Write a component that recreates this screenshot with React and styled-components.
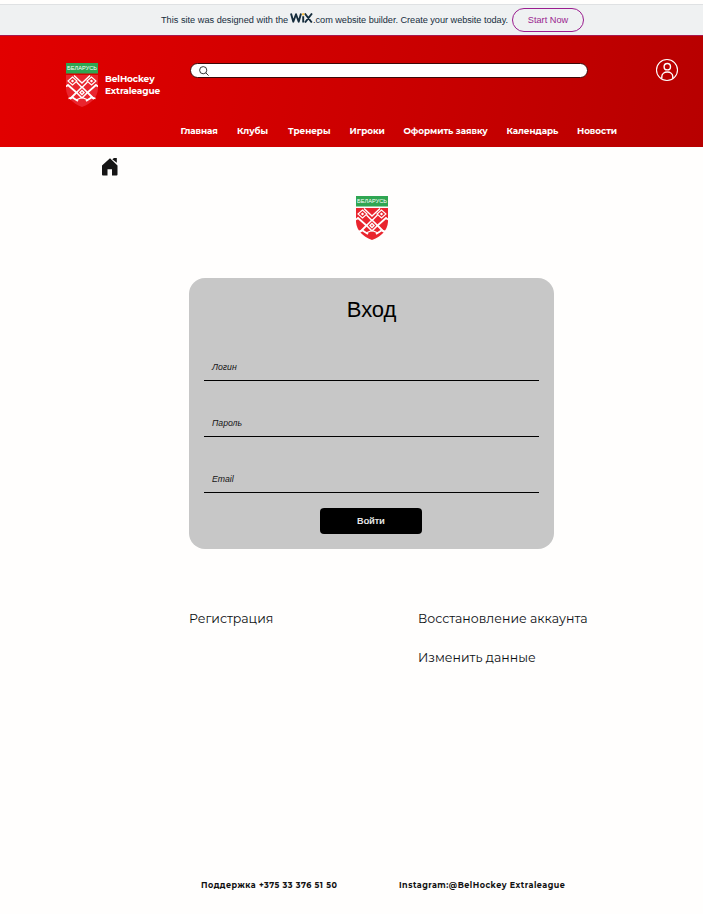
import React from 'react';
import styled, { createGlobalStyle } from 'styled-components';

const GlobalStyle = createGlobalStyle`
  * { box-sizing: border-box; }
  body { margin: 0; background: #fffefd; font-family: "Liberation Sans", Arial, sans-serif; color: #000; }
  h1, p { margin: 0; font-weight: 400; }
  a { color: inherit; text-decoration: none; }
`;

const brandFont = '"Montserrat", "Inter", sans-serif';

const Page = styled.div`
  width: 703px;
  height: 914px;
  overflow: hidden;
  display: flex;
  flex-direction: column;
`;

const AdBar = styled.aside`
  height: 32px;
  margin-top: 4px;
  flex: none;
  border-top: 1px solid #dfe1e3;
  border-bottom: 1px solid #a8184f;
  background: #eff1f2;
  display: flex;
  align-items: center;
  padding-left: 161px;
  font-size: 9.2px;
  color: #162d3d;
  white-space: nowrap;
`;

const AdLead = styled.span`
  width: 129px;
`;

const AdRest = styled.span`
  width: 199px;
  letter-spacing: -0.04px;
`;

const WixMark = styled.svg`
  width: 23px;
  height: 10px;
  margin-bottom: 4px;
  flex: none;
`;

const StartButton = styled.button`
  width: 72px;
  height: 24px;
  flex: none;
  margin-bottom: 1px;
  border: 1px solid #9a1d8f;
  border-radius: 12px;
  background: transparent;
  color: #9a1d8f;
  font: 9.2px "Liberation Sans", Arial, sans-serif;
  padding: 0;
`;

const Header = styled.header`
  height: 111px;
  flex: none;
  background: linear-gradient(100deg, #e20000 0%, #c90000 60%, #b70000 100%);
  color: #fff;
`;

const HeaderTop = styled.div`
  height: 83px;
  padding-left: 66px;
  display: flex;
  align-items: flex-start;
`;

const Brand = styled.a`
  width: 55px;
  margin: 37px 30px 0 7px;
  font: 700 9px/12px ${brandFont};
  letter-spacing: -0.12px;
  white-space: nowrap;
`;

const CrestSvg = styled.svg`
  width: 32px;
  height: 44px;
  flex: none;
  margin-top: ${(p) => p.$top}px;
`;

const SearchBox = styled.div`
  width: 398px;
  height: 15px;
  margin-top: 27px;
  padding-left: 8px;
  border: 1px solid #3b0808;
  border-radius: 8px;
  background: #fff;
  display: flex;
  align-items: center;
`;

const UserButton = styled.a`
  margin: 22px 0 0 67px;
  line-height: 0;
`;

const Nav = styled.nav`
  display: grid;
  grid-template-columns: 56.5px 51px 61.5px 54px 103px 70.5px 60px;
  padding-left: 180.5px;
  font: 700 8.8px/24px ${brandFont};
  letter-spacing: -0.04px;
  white-space: nowrap;
`;

const NavLink = styled.a`
  color: #fff;
`;

const Main = styled.main`
  height: 723px;
  flex: none;
  display: flex;
  flex-direction: column;
`;

const Breadcrumb = styled.div`
  height: 38px;
  padding: 10px 0 0 101px;
`;

const CrestRow = styled.div`
  height: 93px;
  padding-left: 356px;
`;

const LoginCard = styled.form`
  width: 365px;
  height: 271px;
  margin-left: 189px;
  padding: 16px 15px 0;
  border-radius: 16px;
  background: #c7c7c7;
  display: flex;
  flex-direction: column;
  align-items: center;
`;

const Title = styled.h1`
  height: 59px;
  font-size: 22px;
  line-height: 32px;
  letter-spacing: -0.1px;
`;

const Field = styled.label`
  width: 335px;
  height: 28px;
  margin-bottom: 28px;
  padding-left: 8px;
  border-bottom: 1px solid #000;
  font: italic 8.7px/28px "Liberation Sans", Arial, sans-serif;
  color: #151515;
`;

const SubmitButton = styled.button`
  width: 102px;
  height: 26px;
  flex: none;
  align-self: flex-start;
  margin: -13px 0 0 116px;
  border: 0;
  border-radius: 4px;
  background: #000;
  color: #fff;
  padding: 0 0 2px;
  font: 9.7px "Liberation Sans", Arial, sans-serif;
  letter-spacing: 0.15px;
  -webkit-text-stroke: 0.2px #fff;
`;

const AccountLinks = styled.div`
  display: grid;
  grid-template-columns: 229px 170px;
  row-gap: 15px;
  margin: 58px 0 0 189px;
  font: 400 12.5px/24px ${brandFont};
  color: #0d1014;
  white-space: nowrap;
`;

const AccountLink = styled.a`
  grid-column: ${(p) => p.$column};
`;

const Footer = styled.footer`
  display: grid;
  grid-template-columns: 198px 168px;
  padding: 7px 0 0 201px;
  font: 700 8px/16px ${brandFont};
  color: #111;
  white-space: nowrap;
`;

const Contact = styled.p`
  font-weight: 700;
  letter-spacing: 0.5px;
`;

const Crest = ({ top = 0 }) => (
  <CrestSvg viewBox="0 0 32 44" $top={top} aria-label="Беларусь">
    <rect width="32" height="10.5" fill="#2fa652" />
    <text x="1" y="7.4" fill="#fff" fontSize="5.6" fontFamily="Liberation Sans, sans-serif" textLength="30" lengthAdjust="spacing">БЕЛАРУСЬ</text>
    <path d="M0 12h32v14q-1 12-16 18Q1 38 0 26Z" fill="#e9252e" />
    <g fill="none" stroke="#fff">
      <path d="M8 12.5 16 20l8-7.5" strokeWidth="1.4" />
      <path d="m2 18 4.5-4L11 18l-4.5 4Z" strokeWidth="1.1" />
      <path d="m21 18 4.5-4L30 18l-4.5 4Z" strokeWidth="1.1" />
      <path d="m16 24 5.5 5.5L16 35l-5.5-5.5Z" strokeWidth="1.5" />
      <path d="M10.5 19 16 24.5l5.5-5.5" strokeWidth="1.4" />
      <path d="M0 23.5 2 22l8.5 7.5L4 36M32 23.5 30 22l-8.5 7.5L28 36" strokeWidth="1.8" />
      <path d="m2.5 35.5 4-1 5.5 3.5M29.5 35.5l-4-1-5.5 3.5" strokeWidth="1.8" />
      <path d="m10 37 6-2.5 6 2.5" strokeWidth="1.2" />
    </g>
    <path d="m16 26.5 3 3-3 3-3-3ZM6.5 16.4 8.1 18l-1.6 1.6L4.9 18ZM25.5 16.4l1.6 1.6-1.6 1.6-1.6-1.6Z" fill="#fff" />
    <path d="M15.3 28.8h1.4v1.4h-1.4z" fill="#e9252e" />
  </CrestSvg>
);

const navItems = ['Главная', 'Клубы', 'Тренеры', 'Игроки', 'Оформить заявку', 'Календарь', 'Новости'];

export default function App() {
  return (
    <Page>
      <GlobalStyle />
      <AdBar>
        <AdLead>This site was designed with the</AdLead>
        <WixMark viewBox="0 0 23 10" aria-label="Wix">
          <path d="M1 .5 3.3 8.7 6 1.2l2.7 7.5L11 .5M14.8.5l7 9M22 .5l-7 9M13.2 3.2v6.3" fill="none" stroke="#162d3d" strokeWidth="1.9" strokeLinejoin="round" />
          <circle cx="13.2" cy="1.3" r="1.2" fill="#fac249" />
        </WixMark>
        <AdRest>.com website builder. Create your website today.</AdRest>
        <StartButton>Start Now</StartButton>
      </AdBar>
      <Header>
        <HeaderTop>
          <Crest top={27} />
          <Brand>BelHockey<br />Extraleague</Brand>
          <SearchBox>
            <svg width="10" height="10" viewBox="0 0 10 10" fill="none" stroke="#222" strokeWidth=".9">
              <circle cx="4.2" cy="4.2" r="3.6" />
              <path d="m6.8 6.8 2.8 2.8" />
            </svg>
          </SearchBox>
          <UserButton aria-label="Профиль">
            <svg width="24" height="24" viewBox="0 0 24 24" fill="none" stroke="#fff">
              <circle cx="12" cy="12" r="10.5" strokeWidth="1.1" />
              <circle cx="12.3" cy="8.7" r="3.2" strokeWidth="1.4" />
              <path d="M6.8 20.5v-1.8c0-6.2 11-6.2 11 0v1.8" strokeWidth="1.4" />
            </svg>
          </UserButton>
        </HeaderTop>
        <Nav>
          {navItems.map((label) => <NavLink key={label}>{label}</NavLink>)}
        </Nav>
      </Header>
      <Main>
        <Breadcrumb>
          <svg width="18" height="19" viewBox="0 0 18 19" fill="#151515">
            <path d="M1 8.5 9 1.2l7.5 7.3V17.5q0 .9-.9.9H11v-6.2H6.5v6.2H1.9q-.9 0-.9-.9Z" />
            <path d="M11.3 2.2 13 1h2.8v4.8Z" />
          </svg>
        </Breadcrumb>
        <CrestRow><Crest top={11} /></CrestRow>
        <LoginCard>
          <Title>Вход</Title>
          <Field>Логин</Field>
          <Field>Пароль</Field>
          <Field>Email</Field>
          <SubmitButton type="button">Войти</SubmitButton>
        </LoginCard>
        <AccountLinks>
          <AccountLink $column={1}>Регистрация</AccountLink>
          <AccountLink $column={2}>Восстановление аккаунта</AccountLink>
          <AccountLink $column={2}>Изменить данные</AccountLink>
        </AccountLinks>
      </Main>
      <Footer>
        <Contact>Поддержка +375 33 376 51 50</Contact>
        <Contact>Instagram:@BelHockey Extraleague</Contact>
      </Footer>
    </Page>
  );
}
